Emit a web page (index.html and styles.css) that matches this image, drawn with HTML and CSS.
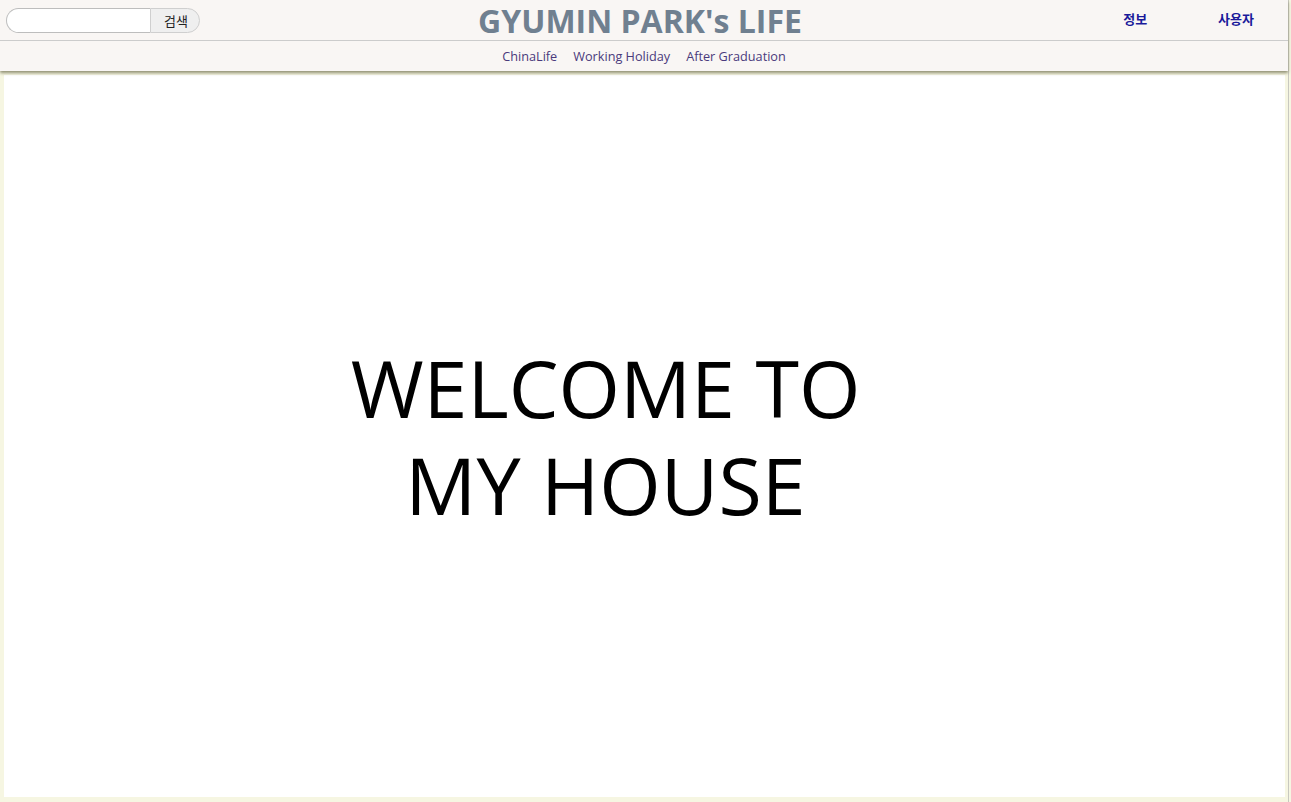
FILE: index.html
```html
<!DOCTYPE html>
<html lang="ko">
<head>
<meta charset="utf-8">
<title>GYUMIN PARK's LIFE</title>
<link rel="stylesheet" href="styles.css">
</head>
<body>
<div class="page">
  <header class="header">
    <div class="top-row">
      <form class="search">
        <input class="search-input" type="text">
        <button class="search-btn" type="button">검색</button>
      </form>
      <h1 class="title">GYUMIN PARK's LIFE</h1>
      <nav class="user-links">
        <a class="user-link" href="#">정보</a>
        <a class="user-link" href="#">사용자</a>
      </nav>
    </div>
    <nav class="menu">
      <a class="menu-link" href="#">ChinaLife</a>
      <a class="menu-link" href="#">Working Holiday</a>
      <a class="menu-link" href="#">After Graduation</a>
    </nav>
  </header>
  <main class="content">
    <p class="welcome">WELCOME TO<br>MY HOUSE</p>
  </main>
</div>
</body>
</html>
```

FILE: styles.css
```css
html, body {
  margin: 0;
  padding: 0;
  height: 100%;
}
body {
  background: #f6f6e2;
  font-family: "Open Sans", "Noto Sans CJK KR", sans-serif;
  overflow: hidden;
}
.page {
  width: 1288px;
  height: 802px;
  border-right: 1px solid #c8c8c0;
  display: flex;
  flex-direction: column;
}
.header {
  background: #f9f6f4;
  box-shadow: 0 2px 3px #8f8f72;
  height: 71px;
  display: flex;
  flex-direction: column;
  position: relative;
  z-index: 1;
}
.top-row {
  height: 40px;
  border-bottom: 1px solid #cccccc;
  display: flex;
  align-items: center;
  position: relative;
}
.search {
  display: flex;
  margin: 0 0 0 6px;
  height: 25px;
}
.search-input {
  width: 144px;
  height: 25px;
  box-sizing: border-box;
  border: 1px solid #bdbdbd;
  border-right: none;
  border-radius: 13px 0 0 13px;
  background: #fff;
  padding: 0 8px;
  margin: 0;
  outline: none;
}
.search-btn {
  width: 50px;
  height: 25px;
  box-sizing: border-box;
  border: 1px solid #cfcfcf;
  border-radius: 0 13px 13px 0;
  background: #efefef;
  font-family: "Noto Sans CJK KR", sans-serif;
  font-size: 13px;
  color: #222;
  padding: 0 2px 0 4px;
  margin: 0;
}
.title {
  position: absolute;
  left: 0;
  right: 0;
  top: 0;
  margin: 0;
  padding-right: 8px;
  text-align: center;
  font-size: 32px;
  line-height: 42px;
  font-weight: 700;
  color: #708090;
  pointer-events: none;
}
.user-links {
  margin-left: auto;
  display: flex;
  gap: 71px;
  padding-right: 34px;
  align-self: flex-start;
  padding-top: 9px;
}
.user-link {
  font-family: "Noto Sans CJK KR", sans-serif;
  font-size: 13px;
  font-weight: 700;
  color: #1a1a9a;
  text-decoration: none;
}
.menu {
  flex: 1;
  display: flex;
  justify-content: center;
  align-items: center;
  gap: 16px;
}
.menu-link {
  font-size: 12.7px;
  color: #4a3a7c;
  text-decoration: none;
}
.content {
  margin: 4px 3px 5px 4px;
  flex: 1;
  background: #ffffff;
  display: flex;
  align-items: center;
  justify-content: center;
  padding-right: 78px;
}
.welcome {
  margin: 0;
  text-align: center;
  font-size: 79px;
  line-height: 97px;
  font-weight: 400;
  color: #000;
}
```
